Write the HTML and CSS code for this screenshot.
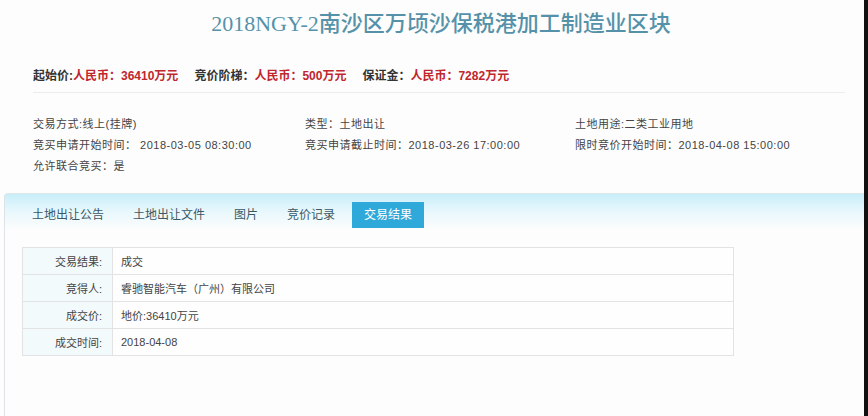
FILE: index.html
```html
<!DOCTYPE html>
<html lang="zh-CN">
<head>
  <meta charset="UTF-8" />
  <meta name="viewport" content="width=device-width, initial-scale=1" />
  <title>2018NGY-2南沙区万顷沙保税港加工制造业区块</title>
  <link rel="stylesheet" href="styles.css">
</head>
<body>
  <div class="page">
    <div class="head">
      <h1>2018NGY-2南沙区万顷沙保税港加工制造业区块</h1>
      <div class="prices">
        <span class="price">起始价:<em>人民币：36410万元</em></span>
        <span class="price">竞价阶梯：<em>人民币：500万元</em></span>
        <span class="price">保证金：<em>人民币：7282万元</em></span>
      </div>
      <div class="info">
        <div>交易方式:线上(挂牌)</div>
        <div>类型：土地出让</div>
        <div>土地用途:二类工业用地</div>
        <div>竞买申请开始时间： 2018-03-05 08:30:00</div>
        <div>竞买申请截止时间：2018-03-26 17:00:00</div>
        <div>限时竞价开始时间：2018-04-08 15:00:00</div>
        <div>允许联合竞买：是</div>
      </div>
    </div>

    <div class="panel">
      <ul class="tabs">
        <li>土地出让公告</li>
        <li>土地出让文件</li>
        <li>图片</li>
        <li>竞价记录</li>
        <li class="active">交易结果</li>
      </ul>
      <table class="result">
        <tr><th>交易结果:</th><td>成交</td></tr>
        <tr><th>竞得人:</th><td>睿驰智能汽车（广州）有限公司</td></tr>
        <tr><th>成交价:</th><td>地价:36410万元</td></tr>
        <tr><th>成交时间:</th><td>2018-04-08</td></tr>
      </table>
    </div>
  </div>
</body>
</html>
```

FILE: styles.css
```css
html, body {
  margin: 0;
  height: 100%;
  background: #fdfdfd;
  font-family: "Liberation Sans", "Noto Sans CJK SC", sans-serif;
  font-size: 11px;
  color: #444;
}
.page {
  height: 416px;
  width: 868px;
  box-sizing: border-box;
  border-right: 4px solid #111;
  overflow: hidden;
}
.head {
  padding-top: 10px;
}
h1 {
  margin: 0;
  padding-left: 18px;
  text-align: center;
  font-family: "Liberation Serif", "Noto Sans CJK SC", serif;
  font-size: 22px;
  line-height: 28px;
  font-weight: 500;
  color: #5592a9;
}
.prices {
  margin: 30px 19px 0 33px;
  padding-bottom: 8px;
  line-height: 16px;
  border-bottom: 1px solid #ececec;
  display: flex;
  gap: 16px;
  font-size: 12px;
  font-weight: bold;
  color: #333;
}
.price em {
  font-style: normal;
  color: #c0262d;
}
.info {
  margin-top: 21px;
  padding-left: 33px;
  display: grid;
  grid-template-columns: 272px 270px 1fr;
  line-height: 21px;
  letter-spacing: 0.5px;
  color: #444;
}
.panel {
  margin: 16px 0 0 4px;
  height: 240px;
  border-top: 1px solid #dfe6e9;
  border-left: 1px solid #dde3e6;
  border-top-left-radius: 4px;
  background: linear-gradient(#c8eef9 0, #e6f7fc 16px, #fdfdfd 36px);
}
.tabs {
  list-style: none;
  margin: 0;
  padding: 8px 0 0 15px;
  display: flex;
  gap: 5px;
}
.tabs li {
  padding: 0 12px;
  height: 26px;
  line-height: 26px;
  font-size: 12px;
  color: #3a5866;
}
.tabs li.active {
  background-color: #2fa9d9;
  color: white;
}
.result {
  margin: 19px 0 0 17px;
  width: 712px;
  border-collapse: collapse;
  background: #fefefe;
}
.result th, .result td {
  height: 26px;
  padding-top: 0;
  padding-bottom: 0;
  border: 1px solid #e3e3e3;
  font-weight: normal;
  color: #444;
}
.result th {
  width: 78px;
  padding-right: 10px;
  text-align: right;
  background: #f3fafc;
}
.result td {
  padding-left: 8px;
}
```
